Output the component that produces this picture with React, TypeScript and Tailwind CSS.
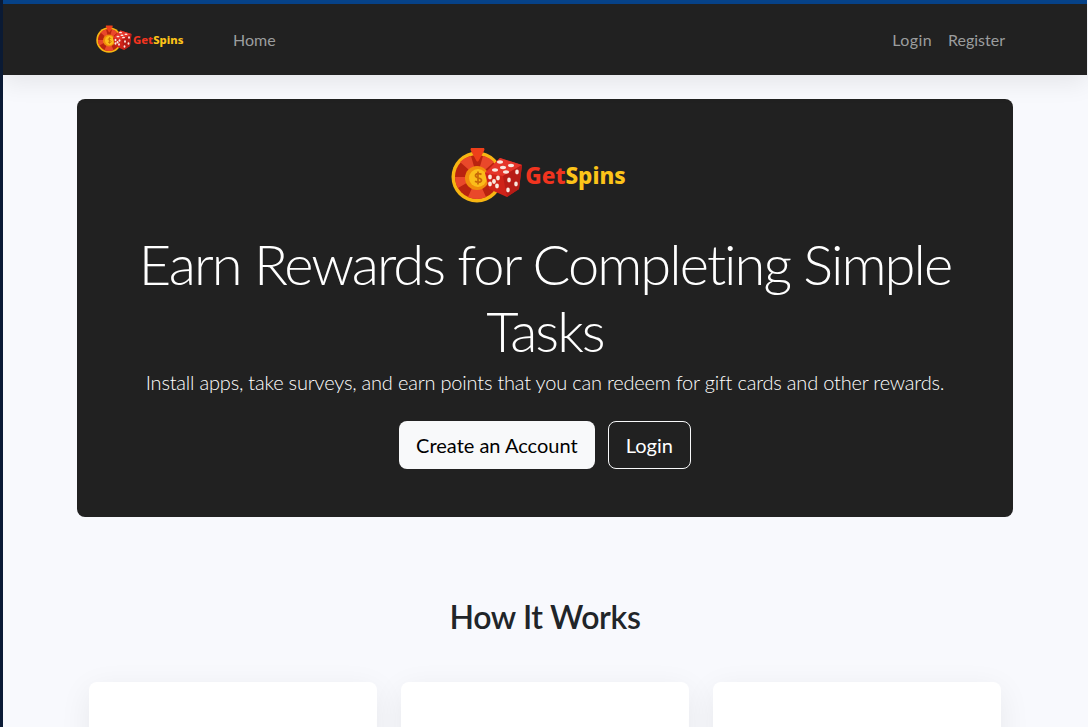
const Logo = ({ className, size, scale }: { className: string; size: string; scale: string }) => (
  <div className={`flex items-center ${className}`}>
    <svg viewBox="0 0 72 58" className={`${scale} shrink-0`}>
      <circle cx="26" cy="30" r="25.500" fill="#f7b512" />
      <circle cx="26" cy="30" r="22" fill="#b9230f" />
      <path d="M26 30 L9 15 A22 22 0 0 1 20 9 Z M26 30 L32 9 A22 22 0 0 1 43 15 Z M26 30 L4 30 A22 22 0 0 0 7 41 Z M26 30 L17 50 A22 22 0 0 0 35 50 Z M26 30 L48 30 A22 22 0 0 1 45 41 Z" fill="#e9482a" />
      <circle cx="26" cy="31" r="12" fill="#f08c0c" />
      <circle cx="27" cy="31" r="9" fill="#fbbd1a" />
      <path d="M30.500 27.500c-2-1.500-6-1-6 1.200 0 3 6 1.500 6 4.500 0 2.200-4 2.500-6.500 1M27 24.500v13" stroke="#c96a08" strokeWidth="1.700" fill="none" />
      <path d="M20 1 L33 1 Q34 2 33 4 L27.500 14 Q26.500 15 25.500 14 L20 4 Q19 2 20 1 Z" fill="#ee3f1a" />
      <path d="M34 26 L49 11 L71 18 L68 42 L56 50 L38 42 Z" fill="#cf2319" />
      <path d="M34 26 L49 11 L71 18 L52 29 Z" fill="#e5352a" />
      <path d="M52 29 L71 18 L68 42 L56 50 Z" fill="#b81c16" />
      <g fill="#f9e8e0">
        <ellipse cx="49" cy="15" rx="3" ry="1.700" />
        <ellipse cx="60" cy="18.500" rx="3" ry="1.700" />
        <ellipse cx="52" cy="20.500" rx="3" ry="1.700" />
        <ellipse cx="44" cy="23" rx="3" ry="1.700" />
        <ellipse cx="55" cy="25" rx="3" ry="1.700" />
        <ellipse cx="39" cy="30" rx="1.900" ry="2.400" />
        <ellipse cx="47" cy="31" rx="1.900" ry="2.400" />
        <ellipse cx="39" cy="37" rx="1.900" ry="2.400" />
        <ellipse cx="46" cy="39" rx="1.900" ry="2.400" />
        <ellipse cx="43" cy="34.500" rx="1.900" ry="2.400" />
        <ellipse cx="58" cy="33" rx="1.800" ry="2.400" />
        <ellipse cx="66" cy="25" rx="1.800" ry="2.400" />
        <ellipse cx="57" cy="43" rx="1.800" ry="2.400" />
        <ellipse cx="65" cy="37" rx="1.800" ry="2.400" />
      </g>
    </svg>
    <span className={`font-['Noto_Sans',sans-serif] font-extrabold leading-none ${size}`}>
      <span className="text-[#f0341f]">Get</span>
      <span className="text-[#fcc419]">Spins</span>
    </span>
  </div>
);

const Card = () => (
  <div className="h-[120px] rounded-lg bg-white shadow-[0_8px_32px_rgba(0,0,0,0.07)]" />
);

export default function App() {
  return (
    <div className="flex h-[727px] overflow-hidden bg-[#f8f9fd] font-['Lato',sans-serif]">
      <div className="w-[3px] shrink-0 bg-[#0b1b36]" />
      <div className="flex min-w-0 flex-1 flex-col pr-px">
        <div className="h-1 shrink-0 bg-[#07438a]" />
        <nav className="relative z-10 flex h-[71px] shrink-0 items-center bg-[#212121] pl-[93px] pr-[82px] shadow-[0_8px_24px_rgba(0,0,0,0.08)]">
          <Logo className="h-[29px] w-[88px]" size="text-[11.300px] ml-px" scale="h-[29px] w-[36px]" />
          <a className="ml-[49px] text-[16px] text-[#9b9d9e]">Home</a>
          <div className="ml-auto flex gap-4 text-[16px] text-[#9b9d9e]">
            <a className="tracking-[0.4px]">Login</a>
            <a>Register</a>
          </div>
        </nav>
        <main className="mx-auto w-[936px] pt-6">
          <section className="flex h-[418px] flex-col items-center rounded-lg bg-[#212121] pt-[48px] text-center text-white">
            <Logo className="h-[58px] pr-[13px]" size="text-[22.500px] ml-0.5" scale="h-[58px] w-[72px]" />
            <h1 className="mt-[25px] w-[860px] text-[56px] font-light leading-[67px] tracking-[-1.950px]">
              Earn Rewards for Completing Simple Tasks
            </h1>
            <p className="mt-[3px] text-[20px] font-light leading-[30px] tracking-[-0.200px]">
              Install apps, take surveys, and earn points that you can redeem for gift cards and other rewards.
            </p>
            <div className="mt-[24px] flex gap-[13px]">
              <button className="h-12 rounded-lg bg-[#f8f9fa] px-[17px] text-[20px] text-black">Create an Account</button>
              <button className="h-12 rounded-lg border border-[#f8f9fa] px-[17px] text-[20px] text-white">Login</button>
            </div>
          </section>
          <h2 className="mt-[80px] text-center text-[32px] font-semibold leading-[40px] tracking-[-0.350px] text-[#212529]">How It Works</h2>
          <div className="mt-[45px] grid grid-cols-3 gap-6 px-3">
            <Card />
            <Card />
            <Card />
          </div>
        </main>
      </div>
    </div>
  );
}
